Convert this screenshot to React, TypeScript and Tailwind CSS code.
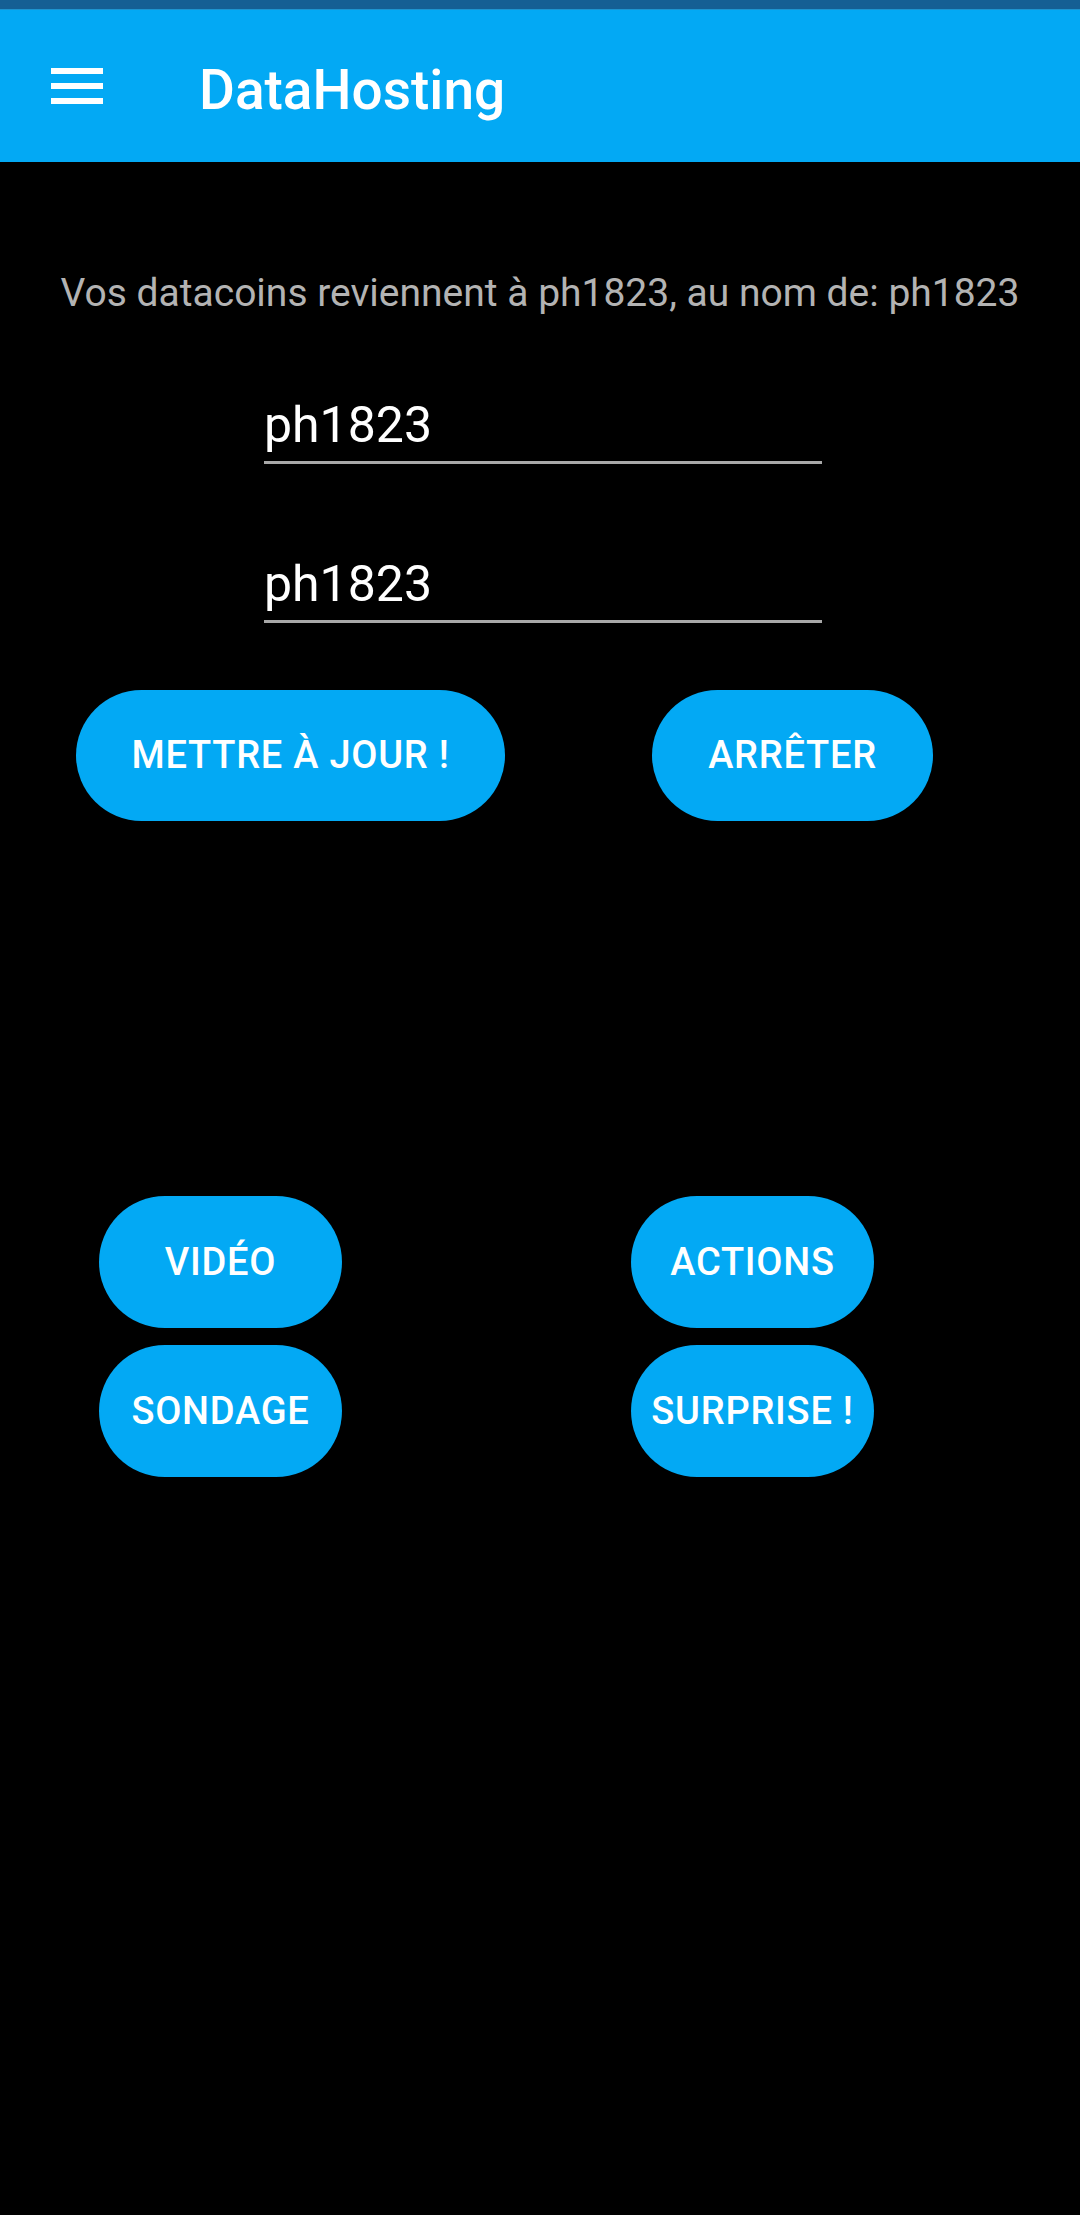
import React from 'react';

const font = { fontFamily: 'Roboto, "Liberation Sans", sans-serif' };

const PillButton: React.FC<{ label: string; className: string }> = ({ label, className }) => (
  <button
    className={`flex items-center justify-center rounded-full bg-[#03a9f4] text-white font-medium text-[38px] tracking-[0.02em] ${className}`}
  >
    {label}
  </button>
);

const App: React.FC = () => {
  return (
    <div className="w-[1080px] h-[2215px] bg-black" style={font}>
      {/* Status strip */}
      <div className="h-[9px] bg-[#155f94]" />
      <div className="h-px bg-[#1e94d0]" />

      {/* App bar */}
      <header className="h-[152px] bg-[#03a9f4] flex items-center">
        <div className="ml-[51px] w-[52px] flex flex-col gap-[9px]">
          <span className="block h-[6px] bg-white" />
          <span className="block h-[6px] bg-white" />
          <span className="block h-[6px] bg-white" />
        </div>
        <h1 className="ml-[96px] text-[55px] font-medium text-white leading-none pt-[8px]">DataHosting</h1>
      </header>

      {/* Content */}
      <main className="flex flex-col">
        <p className="mt-[109px] text-center text-[#b3b3b3] text-[39px] leading-[44px]">
          Vos datacoins reviennent à ph1823, au nom de: ph1823
        </p>

        <div className="mt-[80px] ml-[264px] w-[558px] border-b-[3px] border-[#a8a8a8] pb-[6px]">
          <span className="block text-white text-[50px] leading-[60px]">ph1823</span>
        </div>
        <div className="mt-[90px] ml-[264px] w-[558px] border-b-[3px] border-[#a8a8a8] pb-[6px]">
          <span className="block text-white text-[50px] leading-[60px]">ph1823</span>
        </div>

        <div className="mt-[67px] flex">
          <PillButton label="METTRE À JOUR !" className="ml-[76px] w-[429px] h-[131px]" />
          <PillButton label="ARRÊTER" className="ml-[147px] w-[281px] h-[131px]" />
        </div>

        <div className="mt-[375px] flex">
          <PillButton label="VIDÉO" className="ml-[99px] w-[243px] h-[132px]" />
          <PillButton label="ACTIONS" className="ml-[289px] w-[243px] h-[132px]" />
        </div>
        <div className="mt-[17px] flex">
          <PillButton label="SONDAGE" className="ml-[99px] w-[243px] h-[132px]" />
          <PillButton label="SURPRISE !" className="ml-[289px] w-[243px] h-[132px]" />
        </div>
      </main>
    </div>
  );
};

export default App;
